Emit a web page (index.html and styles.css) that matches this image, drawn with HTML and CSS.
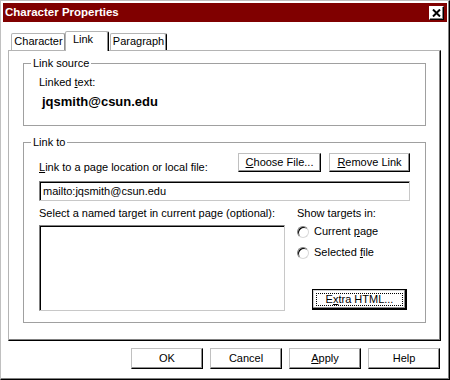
FILE: index.html
```html
<!DOCTYPE html>
<html>
<head>
<meta charset="utf-8">
<link rel="stylesheet" href="styles.css">
</head>
<body>
<div class="window">
  <div class="titlebar">
    <span class="title">Character Properties</span>
    <span class="close"><svg width="9" height="8" viewBox="0 0 9 8"><path d="M1 0.5 L8 7.5 M8 0.5 L1 7.5" stroke="#000" stroke-width="2"/></svg></span>
  </div>
  <div class="body">
    <div class="tabs">
      <div class="tab tab-character">Character</div>
      <div class="tab tab-link active">Link</div>
      <div class="tab tab-paragraph">Paragraph</div>
    </div>
    <div class="panel">
      <div class="group group-source">
        <span class="legend">Link source</span>
        <div class="label">Linked <u>t</u>ext:</div>
        <div class="linked">jqsmith@csun.edu</div>
      </div>
      <div class="group group-target">
        <span class="legend">Link to</span>
        <div class="row-file">
          <div class="label label-file"><u>L</u>ink to a page location or local file:</div>
          <div class="btn btn-choose"><u>C</u>hoose File...</div>
          <div class="btn btn-remove"><u>R</u>emove Link</div>
        </div>
        <div class="textbox">mailto:jqsmith@csun.edu</div>
        <div class="target-grid">
          <div class="col-left">
            <div class="label">Select a named target in current page (optional):</div>
            <div class="listbox"></div>
          </div>
          <div class="col-right">
            <div class="label">Show targets in:</div>
            <div class="radio radio-first"><span class="radio-dot"></span><span>Current <u>p</u>age</span></div>
            <div class="radio radio-second"><span class="radio-dot"></span><span>Selected <u>f</u>ile</span></div>
            <div class="btn btn-default"><span class="focus">E<u>x</u>tra HTML...</span></div>
          </div>
        </div>
      </div>
    </div>
    <div class="footer">
      <div class="btn btn-footer">OK</div>
      <div class="btn btn-footer">Cancel</div>
      <div class="btn btn-footer"><u>A</u>pply</div>
      <div class="btn btn-footer">Help</div>
    </div>
  </div>
</div>
</body>
</html>
```
FILE: styles.css
```css
body {
  margin: 0;
  background: #fff;
  color: #000;
  font-family: "Liberation Sans", Arial, sans-serif;
  font-size: 11px;
  line-height: 13px;
}

u {
  text-decoration: underline;
  text-underline-offset: 1px;
}

.window {
  width: 450px;
  height: 380px;
  box-sizing: border-box;
  border: 1px solid;
  border-color: #c0c0c0 #000 #000 #c0c0c0;
  box-shadow: inset -1px -1px #808080;
  padding: 2px;
  background: #fff;
}

.titlebar {
  height: 19px;
  background: #800000;
  display: flex;
  align-items: center;
  justify-content: space-between;
  padding: 0 3px 0 2px;
}

.title {
  color: #fff;
  font-weight: bold;
  font-size: 11.5px;
}

.close {
  width: 15px;
  height: 14px;
  box-sizing: border-box;
  background: #fff;
  border: 1px solid;
  border-color: #fff #000 #000 #fff;
  box-shadow: inset -1px -1px #808080;
  display: flex;
  align-items: center;
  justify-content: center;
}

.body {
  padding: 9px 6px 0 5px;
}

.tabs {
  display: flex;
  align-items: flex-end;
  height: 19px;
  padding-left: 3px;
}

.tab {
  box-sizing: border-box;
  height: 17px;
  border: 1px solid;
  border-bottom: none;
  border-color: #b4b4b4 #000 transparent #b4b4b4;
  border-radius: 2px 2px 0 0;
  box-shadow: inset -1px 0 #909090;
  background: #fff;
  text-align: center;
  padding-top: 1px;
}

.tab-character {
  width: 55px;
}

.tab-link {
  width: 44px;
  margin-left: -1px;
  padding-right: 8px;
}

.tab-paragraph {
  width: 57px;
  margin-left: 1px;
}

.tab.active {
  height: 20px;
  margin-bottom: -1px;
  position: relative;
  z-index: 1;
}

.panel {
  height: 291px;
  box-sizing: border-box;
  border: 1px solid;
  border-color: #b4b4b4 #000 #000 #b4b4b4;
  box-shadow: inset -1px -1px #808080;
  padding: 12px 14px 0;
}

.group {
  position: relative;
  border: 1px solid #a0a0a0;
}

.legend {
  position: absolute;
  top: -7px;
  left: 7px;
  padding: 0 2px;
  background: #fff;
}

.group-source {
  padding: 12px 15px 16px;
}

.linked {
  margin-top: 5px;
  margin-left: 3px;
  font-weight: bold;
  font-size: 13px;
  line-height: 15px;
}

.group-target {
  margin-top: 16px;
  padding: 10px 15px 11px;
}

.row-file {
  display: flex;
  align-items: flex-end;
  gap: 8px;
  height: 19px;
}

.label-file {
  flex: 1;
  margin-bottom: -2px;
}

.btn {
  box-sizing: border-box;
  height: 19px;
  border: 1px solid;
  border-color: #c0c0c0 #000 #000 #c0c0c0;
  box-shadow: inset -1px -1px #909090;
  background: #fff;
  display: flex;
  align-items: center;
  justify-content: center;
}

.btn-choose {
  width: 83px;
}

.btn-remove {
  width: 81px;
}

.textbox {
  margin-top: 9px;
  height: 20px;
  box-sizing: border-box;
  border: 1px solid;
  border-color: #808080 #c8c8c8 #c8c8c8 #808080;
  box-shadow: inset 1px 1px #000;
  padding-left: 3px;
  display: flex;
  align-items: center;
}

.target-grid {
  display: grid;
  grid-template-columns: 246px 1fr;
  column-gap: 12px;
  margin-top: 6px;
}

.listbox {
  margin-top: 5px;
  height: 86px;
  box-sizing: border-box;
  border: 1px solid;
  border-color: #808080 #c8c8c8 #c8c8c8 #808080;
  box-shadow: inset 1px 1px #000;
}

.radio {
  display: flex;
  align-items: center;
  gap: 5px;
  height: 13px;
}

.radio-first {
  margin-top: 5px;
}

.radio-second {
  margin-top: 8px;
}

.radio-dot {
  width: 12px;
  height: 12px;
  box-sizing: border-box;
  border-radius: 50%;
  border: 1px solid;
  border-color: #808080 #d8d8d8 #d8d8d8 #808080;
  box-shadow: inset 1px 1px #000;
  background: #fff;
}

.btn-default {
  margin-top: 30px;
  margin-left: 15px;
  width: 95px;
  height: 21px;
  padding: 3px;
  border-color: #000;
  box-shadow: inset -1px -1px #000, inset -2px -2px #909090, inset 1px 1px #d0d0d0;
}

.focus {
  flex: 1;
  align-self: stretch;
  border: 1px dotted #000;
  display: flex;
  align-items: center;
  justify-content: center;
}

.footer {
  display: flex;
  justify-content: flex-end;
  gap: 7px;
  margin-top: 7px;
  padding-right: 1px;
}

.btn-footer {
  width: 72px;
  height: 21px;
}
```
